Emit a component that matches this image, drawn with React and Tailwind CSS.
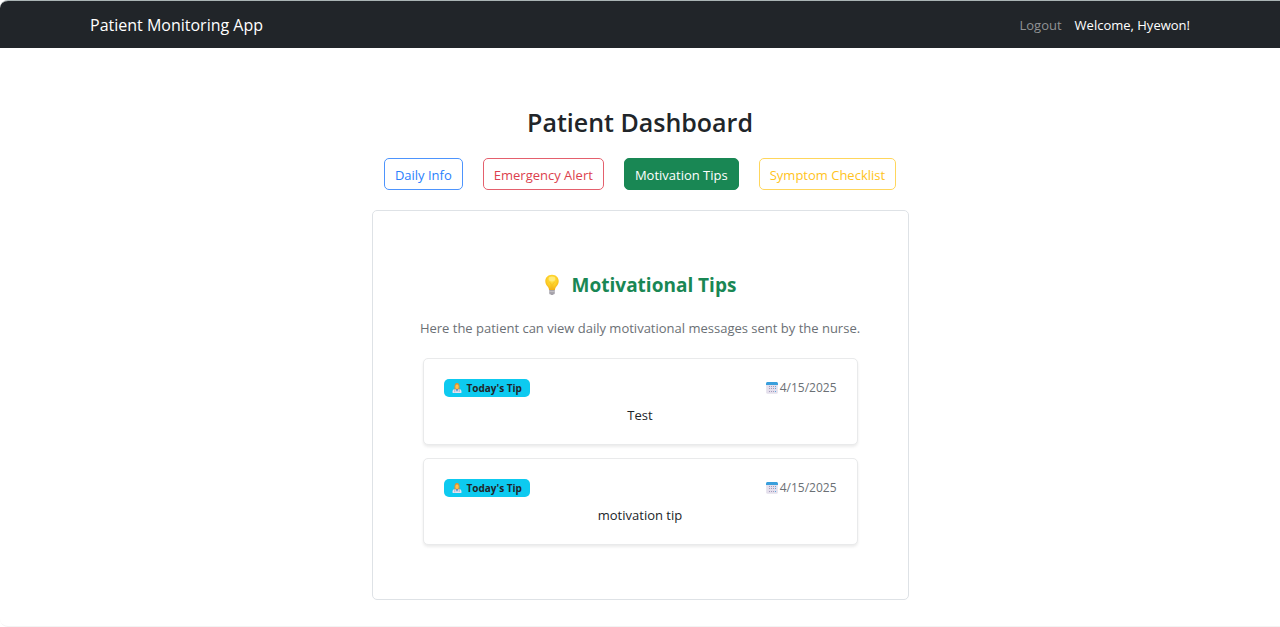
import React from "react";

const tabs = [
  { label: "Daily Info", style: "border-[#4d94fd] text-[#2a7ffd]" },
  { label: "Emergency Alert", style: "border-[#e4606d] text-[#dc3f4e]" },
  { label: "Motivation Tips", style: "border-[#198754] bg-[#198754] text-white", active: true },
  { label: "Symptom Checklist", style: "border-[#ffd65c] text-[#ffc321]" },
];

const tips = [
  { id: 1, date: "4/15/2025", text: "Test" },
  { id: 2, date: "4/15/2025", text: "motivation tip" },
];

function BulbIcon() {
  return (
    <svg className="h-[22px] w-4 shrink-0" viewBox="0 0 16 22" aria-hidden="true">
      <defs>
        <radialGradient id="bulb" cx="0.5" cy="0.35" r="0.65">
          <stop offset="0" stopColor="#ffe34a" />
          <stop offset="0.6" stopColor="#fdce25" />
          <stop offset="1" stopColor="#f2ae18" />
        </radialGradient>
      </defs>
      <path d="M8 .8C4 .8 1.3 3.700 1.300 7.300c0 2.500 1.400 4.100 2.500 5.500.8 1 1.100 1.800 1.200 3.200h6c.1-1.400.4-2.200 1.200-3.200 1.100-1.400 2.500-3 2.500-5.500C14.700 3.700 12 .8 8 .8Z" fill="url(#bulb)" />
      <path d="M5.600 8.200 7.200 10v5.500M10.400 8.200 8.800 10v5.500" fill="none" stroke="#f0b41f" strokeWidth=".6" />
      <ellipse cx="8" cy="5" rx="3.400" ry="2.400" fill="#fff29a" opacity=".65" />
      <path d="M5.200 16h5.600v3.200c0 .8-.9 1.200-1.400 1.200-.3.800-2.500.8-2.800 0-.5 0-1.400-.4-1.400-1.200Z" fill="#a6a3ab" />
      <path d="M5.200 17.600h5.600" stroke="#c9c7cc" strokeWidth=".8" />
    </svg>
  );
}

function NurseIcon() {
  return (
    <svg className="size-[10px] shrink-0" viewBox="0 0 10 10" aria-hidden="true">
      <path d="M.6 10V8.300C.6 6.700 1.800 6 3.200 6h3.600c1.400 0 2.600.7 2.600 2.300V10Z" fill="#e6e3ef" />
      <path d="M3.600 6 5 9 6.400 6Z" fill="#4f8fd0" />
      <path d="M2.800 6.300v3M7.200 6.300v2.600" stroke="#8d87a0" strokeWidth=".6" />
      <path d="M2.600 6.200C2.100 2.500 2.700 0 5 0s2.900 2.500 2.400 6.200Z" fill="#d99336" />
      <ellipse cx="5" cy="3.800" rx="1.700" ry="2.300" fill="#ffc04d" />
    </svg>
  );
}

function CalendarIcon() {
  return (
    <svg className="h-3 w-3 shrink-0" viewBox="0 0 12 12" aria-hidden="true">
      <rect x=".2" y=".3" width="11.600" height="11.400" rx="1.500" fill="#e4dfec" />
      <path d="M0 3V1.700C0 .7.7 0 1.700 0h8.600C11.300 0 12 .7 12 1.700V3Z" fill="#3a9fdc" />
      <path d="M3 4h1v1H3zM5 4h1v1H5zM7 4h1v1H7zM3 6h1v1H3zM5 6h1v1H5zM7 6h1v1H7zM3 9h1v1H3zM5 9h1v1H5zM7 9h1v1H7z" fill="#a39bbb" />
      <path d="M9 4h1v1H9zM9 6h1v1H9zM9 9h1v1H9z" fill="#5aa9dd" />
    </svg>
  );
}

function TipCard({ tip }) {
  return (
    <li className="rounded-[5px] border border-[#e9eaeb] bg-white px-5 pt-5 pb-[19px] shadow-[0_2px_3px_rgba(0,0,0,0.08)]">
      <div className="flex items-center justify-between">
        <span className="flex h-[18px] items-center gap-[5px] rounded-[5px] bg-[#0dcaf0] px-2 text-[10px] leading-none font-bold text-[#212529]">
          <NurseIcon />
          Today's Tip
        </span>
        <time className="flex items-center gap-0.5 text-[12px] leading-[18px] text-[#6b7075]">
          <CalendarIcon />
          {tip.date}
        </time>
      </div>
      <p className="mt-2 text-center text-[13px] leading-5">{tip.text}</p>
    </li>
  );
}

export default function App() {
  return (
    <div className="min-h-screen overflow-hidden rounded-l-lg border-y border-t-[#aab4b4] border-b-[#f3f3f3] bg-white font-['Open_Sans','Noto_Sans',sans-serif] text-[#212529]">
      <nav className="bg-[#212529]">
        <div className="mx-auto flex h-[47px] max-w-[1100px] items-center justify-between">
          <a href="#home" className="text-[16px] leading-6 text-white">
            Patient Monitoring App
          </a>
          <div className="flex items-center gap-[13px] text-[13px] leading-5">
            <a href="#logout" className="text-[#909294]">
              Logout
            </a>
            <span className="text-white">Welcome, Hyewon!</span>
          </div>
        </div>
      </nav>

      <main className="flex flex-col items-center px-4 pt-[58px] pb-6">
        <h1 className="text-[25px] leading-8 font-semibold">Patient Dashboard</h1>
        <div className="mt-5 flex flex-wrap justify-center gap-5">
          {tabs.map((tab) => (
            <button
              key={tab.label}
              type="button"
              aria-pressed={Boolean(tab.active)}
              className={`h-8 rounded-[5px] border px-[10px] pt-0.5 text-[13px] leading-5 ${tab.style}`}
            >
              {tab.label}
            </button>
          ))}
        </div>

        <section className="mt-5 w-full max-w-[537px] rounded-[5px] border border-[#dee2e6] px-[50px] pt-[60px] pb-[54px]">
          <h2 className="flex items-center justify-center gap-3 text-[19px] leading-7 font-bold text-[#198754]">
            <BulbIcon />
            Motivational Tips
          </h2>
          <p className="-mx-8 mt-[19px] text-center text-[13px] leading-5 text-[#6b7075]">
            Here the patient can view daily motivational messages sent by the nurse.
          </p>
          <ul className="mt-5 flex flex-col gap-[13px]">
            {tips.map((tip) => (
              <TipCard key={tip.id} tip={tip} />
            ))}
          </ul>
        </section>
      </main>
    </div>
  );
}
